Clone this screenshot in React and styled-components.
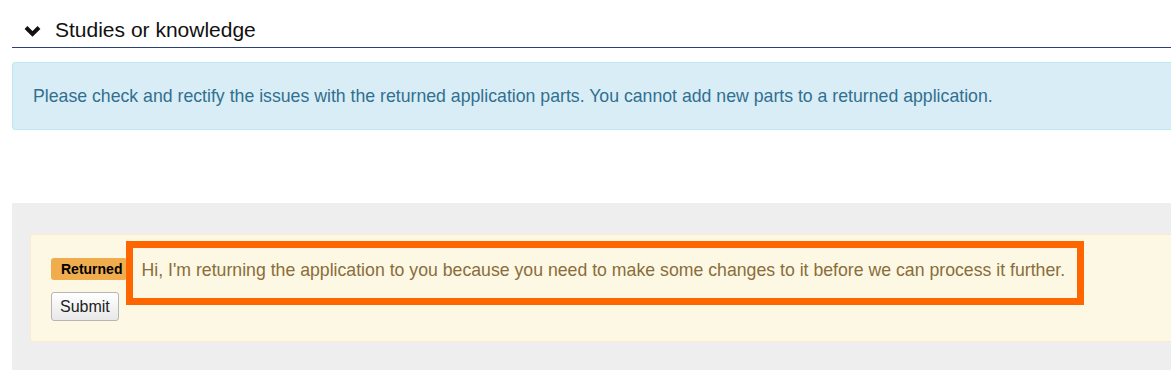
import React from 'react'
import styled, { createGlobalStyle } from 'styled-components'

const GlobalStyle = createGlobalStyle`
  html, body {
    margin: 0;
    padding: 0;
    background: #fff;
    overflow: hidden;
  }
  body {
    font-family: "Liberation Sans", Arial, sans-serif;
    color: #333;
  }
`

const Page = styled.div`
  width: 1200px;
  padding: 17px 0 0 12px;
`

const SectionHeader = styled.div`
  display: flex;
  align-items: center;
  gap: 14px;
  padding: 0 0 4px 12px;
  border-bottom: 1px solid #2d4079;
`

const HeaderTitle = styled.span`
  font-size: 21px;
  line-height: 26px;
  color: #111;
`

const Chevron = styled.svg`
  width: 17px;
  height: 12px;
  flex: none;
  margin-top: 1px;
`

const InfoAlert = styled.div`
  margin-top: 14px;
  padding: 22px 20px 21px;
  background: #d9edf7;
  border: 1px solid #bce8f1;
  border-radius: 3px;
  color: #31708f;
  font-size: 17.7px;
  line-height: 23px;
  white-space: nowrap;
`

const Panel = styled.div`
  margin-top: 73px;
  padding: 31px 18px 30px;
  background: #eeeeee;
`

const WarningAlert = styled.div`
  padding: 23px 20px 20px;
  background: #fcf8e3;
  border: 1px solid #faebcc;
  border-radius: 3px;
  color: #8a6d3b;
`

const StatusRow = styled.div`
  display: flex;
  align-items: flex-start;
`

const Badge = styled.span`
  display: inline-block;
  height: 22px;
  line-height: 22px;
  padding: 0 5px 0 10px;
  background: #f0ad4e;
  border-radius: 3px;
  color: #000;
  font-size: 14px;
  font-weight: bold;
`

const Message = styled.span`
  display: block;
  margin: -17px 0 -25px -1px;
  padding: 11px 12px 17px 8px;
  border: 7px solid #ff6600;
  font-size: 17.7px;
  line-height: 22px;
  color: #8a6d3b;
  white-space: nowrap;
`

const SubmitButton = styled.button`
  display: block;
  margin-top: 12px;
  height: 29px;
  padding: 0 8px;
  font-family: "Liberation Sans", Arial, sans-serif;
  font-size: 16px;
  color: #222;
  background: linear-gradient(#ffffff, #e8e8e8);
  border: 1px solid #b5b5b5;
  border-radius: 3px;
`

export default function App() {
  return (
    <>
      <GlobalStyle />
      <Page>
        <SectionHeader>
          <Chevron viewBox="0 0 17 12">
            <polyline
              points="2,2.5 8.5,9 15,2.5"
              fill="none"
              stroke="#111"
              strokeWidth="4"
              strokeLinejoin="miter"
            />
          </Chevron>
          <HeaderTitle>Studies or knowledge</HeaderTitle>
        </SectionHeader>
        <InfoAlert>
          Please check and rectify the issues with the returned application parts. You cannot add new parts to a returned application.
        </InfoAlert>
        <Panel>
          <WarningAlert>
            <StatusRow>
              <Badge>Returned</Badge>
              <Message>
                Hi, I'm returning the application to you because you need to make some changes to it before we can process it further.
              </Message>
            </StatusRow>
            <SubmitButton>Submit</SubmitButton>
          </WarningAlert>
        </Panel>
      </Page>
    </>
  )
}
